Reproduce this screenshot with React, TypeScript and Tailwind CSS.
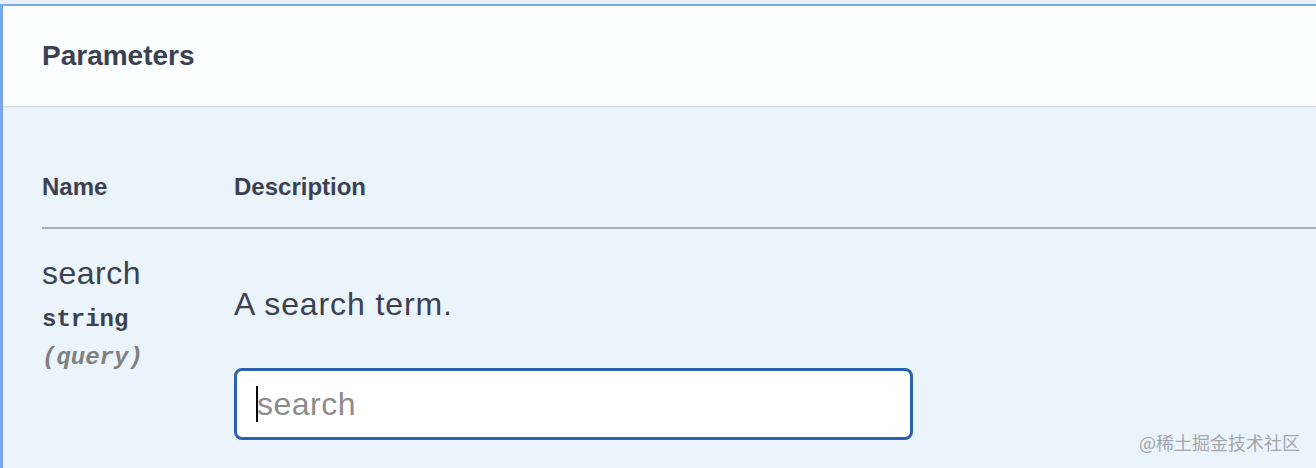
import React from "react";

export default function App() {
  return (
    <div className="relative w-[1316px] h-[468px] overflow-hidden bg-[#e7eef8] pt-[4px] font-['Liberation_Sans',Arial,sans-serif] text-[#3b4151]">
      <div className="h-[464px] border-t-2 border-l-[3px] border-[#79a9ec] bg-[#ebf3fb]">
        <div className="flex h-[100px] items-center bg-[#fcfdfe] px-[39px] shadow-[0_1px_2px_rgba(0,0,0,0.12)]">
          <h4 className="text-[28px] font-bold leading-[32px] text-[#3b4151]">Parameters</h4>
        </div>
        <div className="pl-[39px]">
          <div className="flex border-b-2 border-[#a9aeb6] pt-[67px] pb-[26px]">
            <div className="w-[192px] text-[24px] font-bold leading-[28px]">Name</div>
            <div className="text-[24px] font-bold leading-[28px]">Description</div>
          </div>
          <div className="flex">
            <div className="w-[192px] pt-[26px]">
              <div className="text-[32px] leading-[36px] tracking-[0.5px]">search</div>
              <div className="mt-[14px] font-['Liberation_Mono','Courier_New',monospace] text-[24px] font-bold leading-[30px] text-[#3b4151]">
                string
              </div>
              <div className="mt-[8px] font-['Liberation_Mono','Courier_New',monospace] text-[24px] font-bold italic leading-[30px] text-[#808080]">
                (query)
              </div>
            </div>
            <div className="pt-[57px]">
              <p className="text-[32px] leading-[36px] tracking-[0.9px]">A search term.</p>
              <div className="relative mt-[46px] w-[679px]">
                <input
                  type="text"
                  placeholder="search"
                  className="h-[72px] w-[679px] rounded-[8px] border-[3px] border-[#2d61b5] bg-white pl-[20px] font-['Liberation_Sans',Arial,sans-serif] text-[32px] tracking-[0.5px] text-[#3b4151] outline-none placeholder:text-[#8c8c8c]"
                />
                <span className="absolute left-[22px] top-[18px] h-[36px] w-[2px] bg-black" />
              </div>
            </div>
          </div>
        </div>
      </div>
      <div className="absolute right-[16px] top-[430px] font-['Noto_Sans_CJK_SC',sans-serif] text-[18px] leading-[24px] text-[#a3a7ad]">
        @稀土掘金技术社区
      </div>
    </div>
  );
}
